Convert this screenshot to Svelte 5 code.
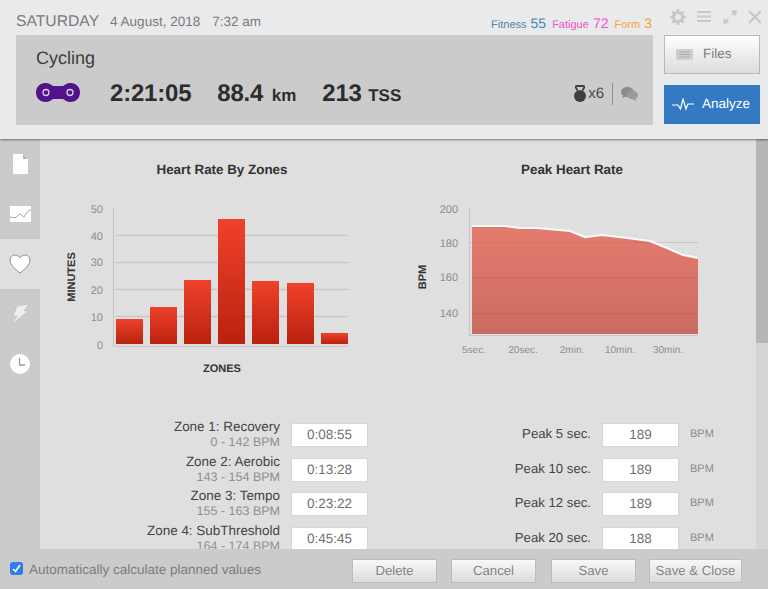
<script>
    const zoneBars = [
        { x: 116, top: 319 }, { x: 150, top: 307 }, { x: 184, top: 280 }, { x: 218, top: 219 },
        { x: 252, top: 281 }, { x: 287, top: 283 }, { x: 321, top: 333 }
    ];
    const zoneTicks = [
        { label: '50', y: 209 }, { label: '40', y: 236 }, { label: '30', y: 262 },
        { label: '20', y: 290 }, { label: '10', y: 317 }, { label: '0', y: 345 }
    ];
    const peakTicks = [
        { label: '200', y: 209 }, { label: '180', y: 243 }, { label: '160', y: 277 }, { label: '140', y: 313 }
    ];
    const peakLabels = [
        { label: '5sec.', x: 474 }, { label: '20sec.', x: 523 }, { label: '2min.', x: 572 },
        { label: '10min.', x: 620 }, { label: '30min.', x: 668 }
    ];
    const peakLine = 'M472 226 L505 226 L520 228 L537 228 L570 231 L585 237 L602 235 L627 238 L650 241 L667 248 L683 255 L698 258';

    const zones = [
        { name: 'Zone 1: Recovery', range: '0 - 142 BPM', time: '0:08:55' },
        { name: 'Zone 2: Aerobic', range: '143 - 154 BPM', time: '0:13:28' },
        { name: 'Zone 3: Tempo', range: '155 - 163 BPM', time: '0:23:22' },
        { name: 'Zone 4: SubThreshold', range: '164 - 174 BPM', time: '0:45:45' }
    ];
    const peaks = [
        { name: 'Peak 5 sec.', value: '189' },
        { name: 'Peak 10 sec.', value: '189' },
        { name: 'Peak 12 sec.', value: '189' },
        { name: 'Peak 20 sec.', value: '188' }
    ];
</script>

<div class="app">
    <header class="header">
        <div class="header-main">
            <div class="date-row">
                <div class="date">
                    <span class="day">SATURDAY</span>
                    <span class="when">4 August, 2018</span>
                    <span class="when">7:32 am</span>
                </div>
                <div class="metrics">
                    <span class="fitness">Fitness <b>55</b></span>
                    <span class="fatigue">Fatigue <b>72</b></span>
                    <span class="form">Form <b>3</b></span>
                </div>
            </div>
            <div class="summary">
                <div class="sport">Cycling</div>
                <div class="stats">
                    <svg class="chain" width="44" height="19" viewBox="0 0 44 19">
                        <path fill="#53128c" d="M9.500 0 C13 0 15 1.500 17 3 L27 3 C29 1.500 31 0 34.500 0 C40 0 44 4 44 9.500 C44 15 40 19 34.500 19 C31 19 29 17.500 27 16 L17 16 C15 17.500 13 19 9.500 19 C4 19 0 15 0 9.500 C0 4 4 0 9.500 0 Z"/>
                        <circle cx="10" cy="9.500" r="3" fill="none" stroke="#d8d2dc" stroke-width="1.300"/>
                        <circle cx="34" cy="9.500" r="3" fill="none" stroke="#d8d2dc" stroke-width="1.300"/>
                    </svg>
                    <span class="stat time">2:21:05</span>
                    <span class="stat dist">88.4 <small>km</small></span>
                    <span class="stat tss">213 <small>TSS</small></span>
                    <div class="extras">
                        <svg width="12" height="17" viewBox="0 0 12 17">
                            <circle cx="6" cy="11" r="6" fill="#3f3f3f"/>
                            <path fill="none" stroke="#3f3f3f" stroke-width="1.800" d="M3.500 5.500 L1.800 2.500 Q1.500 1 3 1 H9 Q10.500 1 10.200 2.500 L8.500 5.500"/>
                        </svg>
                        <span class="count">x6</span>
                        <span class="divider"></span>
                        <svg width="17" height="14" viewBox="0 0 17 14">
                            <ellipse cx="6.500" cy="5" rx="6.500" ry="5" fill="#8b8b8b"/>
                            <path fill="#8b8b8b" d="M2 8 L1.500 11 L6 9 Z"/>
                            <ellipse cx="11.500" cy="8" rx="5.500" ry="4.300" fill="#9a9a9a"/>
                            <path fill="#9a9a9a" d="M14 11 L16 14 L11 12 Z"/>
                        </svg>
                    </div>
                </div>
            </div>
        </div>
        <div class="header-side">
            <div class="window-icons">
                <svg width="16" height="16" viewBox="0 0 16 16">
                    <circle cx="8" cy="8" r="4.500" fill="none" stroke="#c6c8ca" stroke-width="3"/>
                    <path stroke="#c6c8ca" stroke-width="2.600" d="M8 0v3M8 13v3M0 8h3M13 8h3M2.300 2.300l2.200 2.200M11.500 11.500l2.200 2.200M2.300 13.700l2.200-2.200M11.500 4.500l2.200-2.200"/>
                </svg>
                <svg width="14" height="13" viewBox="0 0 14 13">
                    <path stroke="#c6c8ca" stroke-width="2" d="M0 2h14M0 6.500h14M0 11h14"/>
                </svg>
                <svg width="14" height="14" viewBox="0 0 14 14">
                    <path fill="#c6c8ca" d="M8 1 L14 0 L13 6 L11 4 L9 6 L8 5 L10 3 Z M0 14 L1 8 L3 10 L5 8 L6 9 L4 11 L6 13 Z"/>
                </svg>
                <svg width="14" height="14" viewBox="0 0 14 14">
                    <path stroke="#c6c8ca" stroke-width="2.200" d="M1 1 L13 13 M13 1 L1 13"/>
                </svg>
            </div>
            <button class="side-btn files">
                <svg width="17" height="11" viewBox="0 0 17 11">
                    <rect width="17" height="11" fill="#cfcfcf"/>
                    <path stroke="#aeaeae" d="M3 3h11M3 5.500h11M3 8h11"/>
                </svg>
                Files
            </button>
            <button class="side-btn analyze">
                <svg width="22" height="13" viewBox="0 0 22 13">
                    <path fill="none" stroke="#fff" stroke-width="1.200" d="M0 7 H6 L8.500 11 L11 1 L14 11 L16 6 H22"/>
                </svg>
                Analyze
            </button>
        </div>
    </header>

    <div class="body">
        <nav class="tabs">
            <div class="tab">
                <svg width="15" height="20" viewBox="0 0 15 20">
                    <path fill="#fff" d="M0 0 H10 L15 5 V20 H0 Z"/>
                    <path fill="#b5b5b5" d="M10 0 L15 5 H10 Z"/>
                </svg>
            </div>
            <div class="tab">
                <svg width="21" height="16" viewBox="0 0 21 16">
                    <rect width="21" height="16" fill="#fff"/>
                    <path fill="none" stroke="#a8a8a8" d="M0 11 L5 12 L10 8 L14 11 L18 5 L21 4"/>
                </svg>
            </div>
            <div class="tab active">
                <svg width="22" height="20" viewBox="0 0 22 20">
                    <path fill="#fff" stroke="#8f8f8f" d="M11 19 C6 15 1 11 1 6 C1 3 3.500 1 6 1 C8 1 10 2 11 4 C12 2 14 1 16 1 C18.500 1 21 3 21 6 C21 11 16 15 11 19 Z"/>
                </svg>
            </div>
            <div class="tab">
                <svg width="20" height="21" viewBox="0 0 20 21">
                    <path fill="#eeeeee" stroke="#b4b4b4" stroke-width=".5" d="M7 2 L19 0 L14 7 L18 7 L1 21 L7 12 L3 12 Z"/>
                </svg>
            </div>
            <div class="tab">
                <svg width="20" height="20" viewBox="0 0 20 20">
                    <circle cx="10" cy="10" r="10" fill="#fff"/>
                    <path fill="none" stroke="#9a9a9a" stroke-width="1.300" d="M9.500 4 V11 H15"/>
                </svg>
            </div>
        </nav>

        <main class="content">
            <div class="columns">
                <section class="column left">
                    <h2>Heart Rate By Zones</h2>
                    <svg class="chart" width="364" height="220" viewBox="40 180 364 220">
                        <defs>
                            <linearGradient id="bar" x1="0" y1="0" x2="0" y2="1">
                                <stop offset="0" stop-color="#f0412b"/>
                                <stop offset="1" stop-color="#b9220e"/>
                            </linearGradient>
                        </defs>
                        {#each [235, 262, 289, 316] as y}
                            <line x1="116" x2="348" y1={y + .5} y2={y + .5} stroke="#c6c6c6" stroke-width="1.400"/>
                        {/each}
                        <path fill="none" stroke="#c6c6c6" stroke-width="1.200" d="M113.500 208 V346.500 H348"/>
                        {#each zoneBars as bar}
                            <rect x={bar.x} y={bar.top} width="27" height={344 - bar.top} fill="url(#bar)"/>
                        {/each}
                        {#each zoneTicks as tick}
                            <text class="tick" x="103" y={tick.y + 4} text-anchor="end">{tick.label}</text>
                        {/each}
                        <text class="axis" transform="translate(75 277) rotate(-90)" text-anchor="middle">MINUTES</text>
                        <text class="axis" x="222" y="372" text-anchor="middle">ZONES</text>
                    </svg>
                    <div class="rows">
                        {#each zones as zone}
                            <div class="row">
                                <div class="label">
                                    <div class="name">{zone.name}</div>
                                    <div class="range">{zone.range}</div>
                                </div>
                                <div class="input">{zone.time}</div>
                            </div>
                        {/each}
                    </div>
                </section>

                <section class="column right">
                    <h2>Peak Heart Rate</h2>
                    <svg class="chart" width="336" height="220" viewBox="404 180 336 220">
                        <defs>
                            <linearGradient id="area" x1="0" y1="0" x2="0" y2="1">
                                <stop offset="0" stop-color="#e57b6e"/>
                                <stop offset="1" stop-color="#ca6c62"/>
                            </linearGradient>
                        </defs>
                        <line x1="470" x2="698" y1="242.500" y2="242.500" stroke="#c6c6c6" stroke-width="1.200"/>
                        <path fill="url(#area)" d="{peakLine} V334 H472 Z"/>
                        {#each [277.500, 313.500] as y}
                            <line x1="472" x2="698" y1={y} y2={y} stroke="#a9544a" stroke-opacity=".3"/>
                        {/each}
                        <line x1="472" x2="655" y1="242.500" y2="242.500" stroke="#a9544a" stroke-opacity=".2"/>
                        <path fill="none" stroke="#fbfafa" stroke-width="2.200" d={peakLine}/>
                        <path fill="none" stroke="#c6c6c6" stroke-width="1.200" d="M469.500 208 V335.500 H698"/>
                        {#each peakTicks as tick}
                            <text class="tick" x="458" y={tick.y + 4} text-anchor="end">{tick.label}</text>
                        {/each}
                        {#each peakLabels as item}
                            <text class="tick small" x={item.x} y="353" text-anchor="middle">{item.label}</text>
                        {/each}
                        <text class="axis" transform="translate(426 277) rotate(-90)" text-anchor="middle">BPM</text>
                    </svg>
                    <div class="rows">
                        {#each peaks as peak}
                            <div class="row">
                                <div class="label"><div class="name">{peak.name}</div></div>
                                <div class="input">{peak.value}</div>
                                <span class="unit">BPM</span>
                            </div>
                        {/each}
                    </div>
                </section>
            </div>
        </main>

        <div class="scrollbar"><div class="thumb"></div></div>
    </div>

    <footer class="footer">
        <label class="auto">
            <span class="check">
                <svg width="9" height="9" viewBox="0 0 9 9">
                    <path fill="none" stroke="#fff" stroke-width="1.700" d="M1 5 L3.500 7.500 L8 1"/>
                </svg>
            </span>
            <span class="auto-text">Automatically calculate planned values</span>
        </label>
        <div class="actions">
            <button class="action delete">Delete</button>
            <button class="action cancel">Cancel</button>
            <button class="action save">Save</button>
            <button class="action close">Save &amp; Close</button>
        </div>
    </footer>
</div>

<style>
    :global(body) {
        margin: 0;
        background: #e0dfdf;
    }

    .app {
        width: 768px;
        height: 589px;
        display: flex;
        flex-direction: column;
        overflow: hidden;
        position: relative;
        font-family: "Liberation Sans", Arial, sans-serif;
        text-rendering: geometricPrecision;
    }

    button {
        font-family: inherit;
        text-rendering: inherit;
        cursor: pointer;
    }

    svg {
        display: block;
        flex-shrink: 0;
    }

    .header {
        height: 139px;
        box-sizing: border-box;
        flex-shrink: 0;
        display: flex;
        gap: 11px;
        padding: 0 8px 0 16px;
        background: #e9eaec;
        box-shadow: 0 1px 2px rgba(0, 0, 0, 0.45);
        position: relative;
        z-index: 2;
    }

    .header-main {
        width: 637px;
    }

    .date-row {
        height: 35px;
        display: flex;
        justify-content: space-between;
        align-items: flex-end;
        padding-bottom: 4px;
        box-sizing: border-box;
    }

    .date {
        display: flex;
        align-items: baseline;
        color: #7b7b7b;
    }

    .day {
        font-size: 15.700px;
        margin-right: 11px;
    }

    .when {
        font-size: 13.500px;
        margin-right: 12px;
    }

    .metrics {
        display: flex;
        align-items: baseline;
        gap: 6px;
        font-size: 11px;
        margin-right: 1px;
    }

    .metrics b {
        font-weight: 400;
        font-size: 14px;
        margin-left: 1px;
    }

    .fitness { color: #4f84ab; }
    .fatigue { color: #f550c6; }
    .form { color: #f5a52e; }

    .summary {
        height: 90px;
        background: #cbcbcb;
        padding: 11px 20px 0;
        box-sizing: border-box;
    }

    .sport {
        font-size: 18px;
        color: #3d3d3d;
        line-height: 24px;
    }

    .stats {
        display: flex;
        align-items: center;
        margin-top: 9px;
        height: 26px;
        color: #2d2d2d;
    }

    .chain {
        margin-right: 30px;
    }

    .stat {
        font-size: 24px;
        font-weight: 700;
        letter-spacing: -0.200px;
        margin-top: 4px;
    }

    .stat small {
        font-size: 17px;
        letter-spacing: 0;
    }

    .dist small {
        margin-left: 2px;
    }

    .time { margin-right: 26px; }
    .dist { margin-right: 26px; }

    .extras {
        margin-left: auto;
        display: flex;
        align-items: center;
        margin-right: -5px;
        margin-top: 3px;
    }

    .count {
        font-size: 15px;
        color: #4a4a4a;
        margin-left: 2px;
    }

    .divider {
        width: 1px;
        height: 22px;
        background: #8d8d8d;
        margin: 0 8px;
    }

    .header-side {
        width: 96px;
        display: flex;
        flex-direction: column;
    }

    .window-icons {
        height: 35px;
        display: flex;
        align-items: center;
        justify-content: space-between;
        padding: 0 0 2px 6px;
        box-sizing: border-box;
        margin-right: -2px;
    }

    .side-btn {
        width: 96px;
        height: 39px;
        display: flex;
        align-items: center;
        font-size: 13.500px;
        box-sizing: border-box;
        padding-bottom: 2px;
    }

    .side-btn svg {
        margin-top: 2px;
    }

    .files {
        gap: 10px;
        padding-left: 11px;
        padding-right: 0;
        padding-top: 0;
        color: #7c7c7c;
        border: 1px solid #b9b9b9;
        background: linear-gradient(#fff, #dcdcdc);
        margin-bottom: 11px;
    }

    .analyze {
        gap: 8px;
        padding-left: 8px;
        padding-right: 0;
        padding-top: 0;
        color: #fff;
        border: none;
        background: #3479c4;
    }

    .body {
        flex: 1;
        min-height: 0;
        display: flex;
    }

    .tabs {
        width: 40px;
        flex-shrink: 0;
        background: #cbcbcb;
    }

    .tab {
        height: 50px;
        display: flex;
        align-items: center;
        justify-content: center;
    }

    .tab.active {
        background: #e0dfdf;
    }

    .content {
        flex: 1;
        min-width: 0;
        overflow: hidden;
    }

    .columns {
        display: grid;
        grid-template-columns: 364px 336px;
    }

    h2 {
        margin: 0;
        height: 41px;
        padding-top: 23px;
        box-sizing: border-box;
        font-size: 13.400px;
        font-weight: 700;
        line-height: 16px;
        text-align: center;
        color: #333;
    }

    .chart {
        overflow: visible;
    }

    .tick {
        font-size: 11px;
        fill: #8c8c8c;
    }

    .tick.small {
        font-size: 10px;
    }

    .axis {
        font-size: 11px;
        font-weight: 700;
        fill: #333;
    }

    .rows {
        margin-top: 22px;
    }

    .row {
        display: flex;
        align-items: flex-start;
        height: 34.600px;
    }

    .label {
        text-align: right;
        flex-shrink: 0;
    }

    .left .label {
        width: 240px;
        margin-top: -3px;
    }

    .right .label {
        width: 187px;
        padding-top: 4px;
    }

    .name {
        font-size: 13.200px;
        line-height: 16px;
        color: #444;
    }

    .left .name {
        font-size: 13.450px;
    }

    .range {
        font-size: 12.500px;
        line-height: 15px;
        color: #8e8e8e;
    }

    .input {
        width: 77px;
        height: 24px;
        margin-left: 11px;
        margin-top: 1px;
        box-sizing: border-box;
        background: #fff;
        border: 1px solid #d6d6d6;
        text-align: center;
        font-size: 13.500px;
        line-height: 22px;
        color: #707070;
    }

    .unit {
        margin-left: 11px;
        margin-top: 6px;
        font-size: 11px;
        color: #8a8a8a;
    }

    .scrollbar {
        width: 12px;
        flex-shrink: 0;
        background: #d6d5d5;
    }

    .thumb {
        height: 204px;
        background: #b5b5b5;
    }

    .footer {
        height: 40px;
        flex-shrink: 0;
        display: flex;
        justify-content: space-between;
        align-items: center;
        padding: 0 26px 0 10px;
        background: #cbcbcb;
        position: relative;
        z-index: 1;
    }

    .auto {
        display: flex;
        align-items: center;
        gap: 6px;
        font-size: 13.500px;
        color: #7d7d7d;
        margin-top: -2px;
    }

    .auto-text {
        margin-top: 2px;
    }

    .check {
        width: 13px;
        height: 13px;
        border-radius: 3px;
        background: #2f7bf0;
        display: flex;
        align-items: center;
        justify-content: center;
    }

    .actions {
        display: flex;
        gap: 14px;
        margin-top: 3px;
    }

    .action {
        height: 24px;
        padding: 0;
        box-sizing: border-box;
        font-size: 13.200px;
        color: #858585;
        border: 1px solid #bcbcbc;
        background: linear-gradient(#f8f8f8, #dcdcdc);
    }

    .delete { width: 85px; }
    .cancel { width: 85px; }
    .save { width: 85px; margin-left: 1px; }
    .close { width: 93px; margin-left: -1px; }
</style>
